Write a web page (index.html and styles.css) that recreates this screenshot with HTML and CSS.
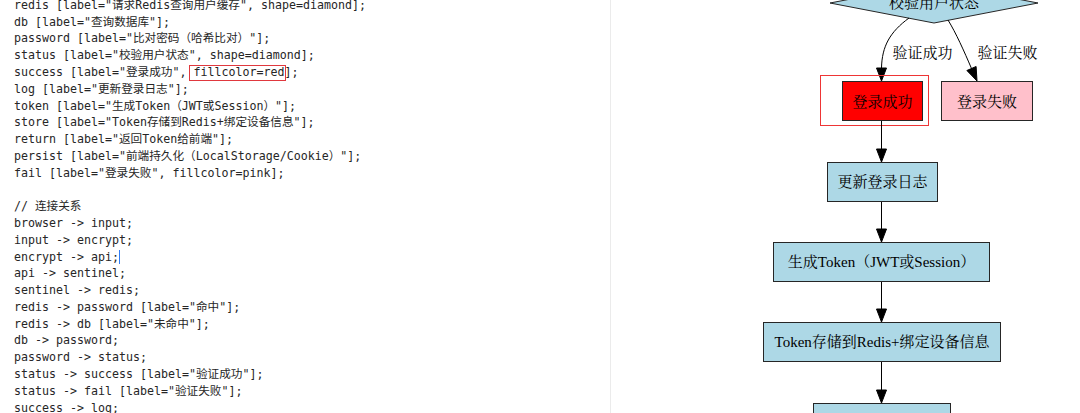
FILE: index.html
```html
<!DOCTYPE html>
<html lang="zh">
<head>
<meta charset="utf-8">
<title>Graphviz 编辑器</title>
<link rel="stylesheet" href="styles.css">
</head>
<body>
<div class="app">
  <div class="editor">
<pre class="code">redis [label="请求Redis查询用户缓存", shape=diamond];
db [label="查询数据库"];
password [label="比对密码（哈希比对）"];
status [label="校验用户状态", shape=diamond];
success [label="登录成功", <span class="hl">fillcolor=red</span>];
log [label="更新登录日志"];
token [label="生成Token（JWT或Session）"];
store [label="Token存储到Redis+绑定设备信息"];
return [label="返回Token给前端"];
persist [label="前端持久化（LocalStorage/Cookie）"];
fail [label="登录失败", fillcolor=pink];

// 连接关系
browser -&gt; input;
input -&gt; encrypt;
encrypt -&gt; api;<span class="caret"></span>
api -&gt; sentinel;
sentinel -&gt; redis;
redis -&gt; password [label="命中"];
redis -&gt; db [label="未命中"];
db -&gt; password;
password -&gt; status;
status -&gt; success [label="验证成功"];
status -&gt; fail [label="验证失败"];
success -&gt; log;</pre>
  </div>
  <div class="preview">
    <svg class="graph" width="469" height="413" viewBox="611 0 469 413" xmlns="http://www.w3.org/2000/svg">
      <polygon class="node blue" points="830,3 934,-17 1038,3 934,23"/>
      <text class="lbl" x="934" y="3">校验用户状态</text>

      <path class="edge" d="M909,18 C890,32 882,46 881.5,68"/>
      <polygon class="head" points="881.5,81 876.5,68 886.5,68"/>
      <path class="edge" d="M948,20 C956,33 964,51 971.5,68.5"/>
      <polygon class="head" points="977,81 976.1,66.5 966.9,70.5"/>
      <text class="lbl" x="922.5" y="53">验证成功</text>
      <text class="lbl" x="1007.5" y="53">验证失败</text>

      <rect class="node red" x="842.5" y="81.5" width="80" height="39"/>
      <text class="lbl" x="882.5" y="101.5">登录成功</text>
      <rect class="node pink" x="941.5" y="81.5" width="91" height="39"/>
      <text class="lbl" x="987" y="101.5">登录失败</text>
      <rect class="mark" x="820.5" y="75.5" width="108" height="50"/>

      <line class="edge" x1="881.5" y1="121" x2="881.5" y2="149"/>
      <polygon class="head" points="881.5,162 876.5,149 886.5,149"/>
      <rect class="node blue" x="827.5" y="162.5" width="110" height="39"/>
      <text class="lbl" x="882.5" y="182">更新登录日志</text>

      <line class="edge" x1="881.5" y1="202" x2="881.5" y2="229"/>
      <polygon class="head" points="881.5,242 876.5,229 886.5,229"/>
      <rect class="node blue" x="773.5" y="242.5" width="216" height="39"/>
      <text class="lbl" x="881.5" y="262">生成Token（JWT或Session）</text>

      <line class="edge" x1="881.5" y1="282" x2="881.5" y2="309"/>
      <polygon class="head" points="881.5,322 876.5,309 886.5,309"/>
      <rect class="node blue" x="763.5" y="322.5" width="237" height="39"/>
      <text class="lbl" x="882" y="342">Token存储到Redis+绑定设备信息</text>

      <line class="edge" x1="881.5" y1="362" x2="881.5" y2="390"/>
      <polygon class="head" points="881.5,403 876.5,390 886.5,390"/>
      <rect class="node blue" x="813.5" y="403.5" width="137" height="39"/>
      <text class="lbl" x="882" y="423">返回Token给前端</text>
    </svg>
  </div>
</div>
</body>
</html>
```
FILE: styles.css
```css
html, body {
  margin: 0;
  padding: 0;
  background: #ffffff;
}

.app {
  display: flex;
  width: 1080px;
  height: 413px;
  overflow: hidden;
  background: #ffffff;
}

.editor {
  width: 610px;
  flex: none;
  overflow: hidden;
  padding-left: 14px;
  box-sizing: border-box;
}

.code {
  margin: -3.2px 0 0 0;
  font-family: "DejaVu Sans Mono", "Noto Sans CJK SC", monospace;
  font-size: 11.63px;
  line-height: 16.78px;
  color: #262626;
  white-space: pre;
}

.hl {
  position: relative;
}

.hl::before {
  content: "";
  position: absolute;
  left: -4px;
  right: -2px;
  top: 0;
  bottom: -2px;
  border: 1px solid #e0383e;
}

.caret {
  display: inline-block;
  width: 0;
  height: 14px;
  border-left: 1px solid #2f7cf6;
  vertical-align: -3px;
}

.preview {
  flex: 1;
  border-left: 1px solid #ebebeb;
  overflow: hidden;
}

.graph {
  display: block;
}

.node {
  stroke: #262626;
  stroke-width: 1;
}

.blue { fill: #add8e6; }
.red { fill: #ff0000; }
.pink { fill: #ffc0cb; }

.mark {
  fill: none;
  stroke: #ee3535;
  stroke-width: 1;
}

.edge {
  fill: none;
  stroke: #000000;
  stroke-width: 1;
}

.head {
  fill: #000000;
  stroke: #000000;
  stroke-width: 1;
}

.lbl {
  font-family: "Liberation Serif", "Noto Serif CJK SC", "Noto Sans CJK SC", serif;
  font-size: 15px;
  fill: #000000;
  text-anchor: middle;
  dominant-baseline: central;
}
```
